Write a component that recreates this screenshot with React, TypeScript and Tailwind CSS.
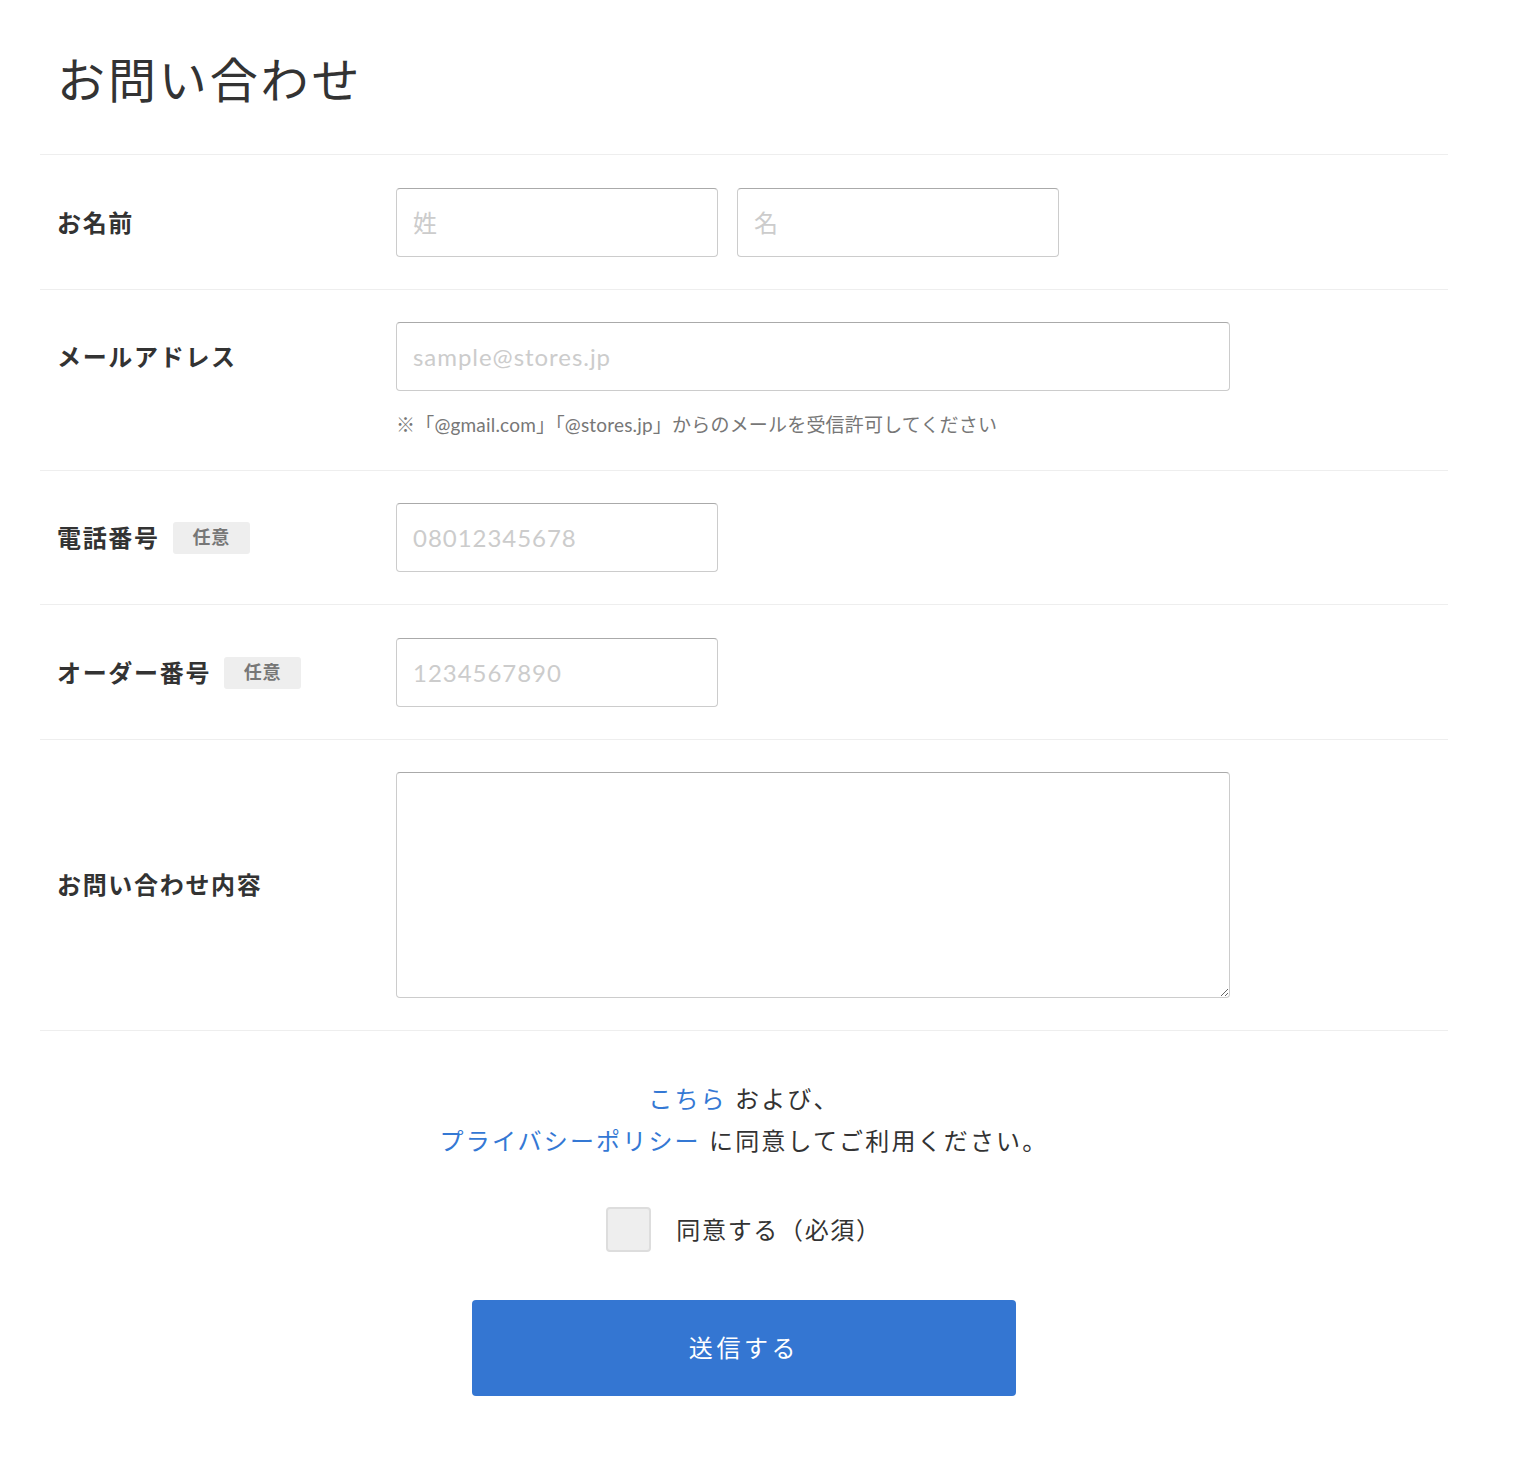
import React from "react";

const inputCls =
  "h-[69px] rounded-[4px] border border-[#cccccc] border-t-[#aaaaaa] bg-white px-[16px] text-[24px] tracking-[0.04em] text-[#333] placeholder:text-[#cccccc] outline-none";

function Badge() {
  return (
    <span className="ml-[13px] inline-flex h-[32px] w-[77px] items-center justify-center rounded-[3px] bg-[#eeeeee] text-[18px] font-bold tracking-[0.04em] text-[#777]">
      任意
    </span>
  );
}

function Label({ children, badge }: { children: React.ReactNode; badge?: boolean }) {
  return (
    <div className="flex h-[69px] w-[339px] shrink-0 items-center text-[24px] font-bold tracking-[0.07em] text-[#333]">
      {children}
      {badge && <Badge />}
    </div>
  );
}

export default function App() {
  return (
    <div
      className="min-h-[1480px] bg-white text-[#333]"
      style={{ fontFamily: 'Lato, "Noto Sans CJK JP", sans-serif' }}
    >
      <div className="ml-[40px] w-[1408px]">
        <div className="h-[154px] pl-[17px] pt-[50px]">
          <h1 className="text-[48px] font-normal leading-[60px] tracking-[0.06em] text-[#333]">お問い合わせ</h1>
        </div>

        <div className="flex border-t border-[#eeeeee] pb-[32px] pl-[17px] pt-[33px]">
          <Label>お名前</Label>
          <div className="flex gap-[19px]">
            <input className={`${inputCls} w-[322px]`} placeholder="姓" />
            <input className={`${inputCls} w-[322px]`} placeholder="名" />
          </div>
        </div>

        <div className="flex border-t border-[#eeeeee] pb-[32px] pl-[17px] pt-[32px]">
          <Label>メールアドレス</Label>
          <div className="flex flex-col">
            <input className={`${inputCls} w-[834px]`} placeholder="sample@stores.jp" />
            <p className="mt-[20px] text-[19px] leading-[27px] tracking-[0.01em] text-[#777]">
              ※「@gmail.com」「@stores.jp」からのメールを受信許可してください
            </p>
          </div>
        </div>

        <div className="flex border-t border-[#eeeeee] pb-[32px] pl-[17px] pt-[32px]">
          <Label badge>電話番号</Label>
          <input className={`${inputCls} w-[322px]`} placeholder="08012345678" />
        </div>

        <div className="flex border-t border-[#eeeeee] pb-[32px] pl-[17px] pt-[33px]">
          <Label badge>オーダー番号</Label>
          <input className={`${inputCls} w-[322px]`} placeholder="1234567890" />
        </div>

        <div className="flex items-center border-y border-[#eeeeee] pb-[32px] pl-[17px] pt-[32px]">
          <Label>お問い合わせ内容</Label>
          <textarea className="block h-[226px] w-[834px] rounded-[4px] border border-[#cccccc] border-t-[#aaaaaa] bg-white p-[16px] text-[24px] outline-none" />
        </div>

        <div className="flex flex-col items-center pt-[47px]">
          <p className="text-center text-[24px] leading-[42px] tracking-[0.09em] text-[#333]">
            <span className="text-[#3478d4]">こちら</span> および、
            <br />
            <span className="text-[#3478d4]">プライバシーポリシー</span> に同意してご利用ください。
          </p>

          <label className="mt-[45px] flex items-center">
            <span className="block h-[45px] w-[45px] rounded-[4px] border-2 border-[#dddddd] bg-[#eeeeee]" />
            <span className="ml-[25px] text-[24px] leading-[45px] tracking-[0.07em] text-[#333]">同意する（必須）</span>
          </label>

          <button className="mt-[48px] h-[96px] w-[544px] rounded-[4px] bg-[#3476d2] text-[24px] tracking-[0.15em] text-white">
            送信する
          </button>
        </div>
      </div>
    </div>
  );
}
